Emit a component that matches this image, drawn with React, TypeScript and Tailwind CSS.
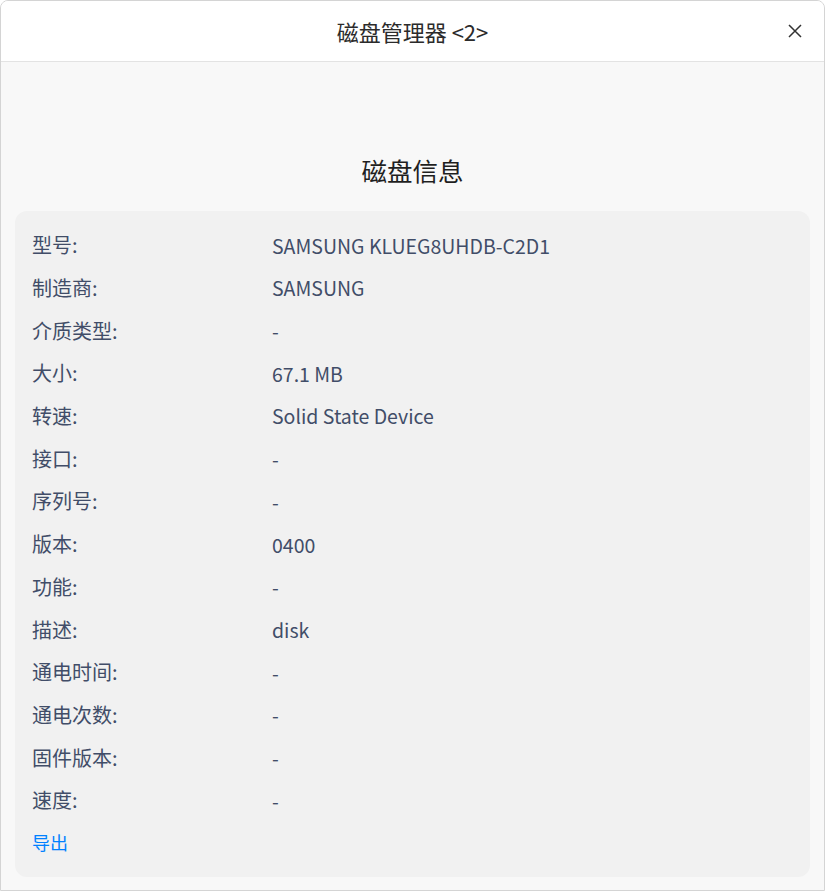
import React from "react";

// Righe delle informazioni del disco
const rows: { label: string; value: string }[] = [
  { label: "型号:", value: "SAMSUNG KLUEG8UHDB-C2D1" },
  { label: "制造商:", value: "SAMSUNG" },
  { label: "介质类型:", value: "-" },
  { label: "大小:", value: "67.1 MB" },
  { label: "转速:", value: "Solid State Device" },
  { label: "接口:", value: "-" },
  { label: "序列号:", value: "-" },
  { label: "版本:", value: "0400" },
  { label: "功能:", value: "-" },
  { label: "描述:", value: "disk" },
  { label: "通电时间:", value: "-" },
  { label: "通电次数:", value: "-" },
  { label: "固件版本:", value: "-" },
  { label: "速度:", value: "-" },
];

const App: React.FC = () => {
  return (
    <div
      className="w-[825px] h-[891px] bg-[#f8f8f8] border border-[#d4d4d4] rounded-t-[8px] flex flex-col overflow-hidden"
      style={{ fontFamily: '"Noto Sans CJK SC", "Noto Sans", sans-serif' }}
    >
      {/* Barra del titolo */}
      <div className="h-[61px] shrink-0 bg-white border-b border-[#e3e3e3] flex items-center justify-center relative">
        <span className="text-[22px] text-[#2b2b2b]">磁盘管理器 &lt;2&gt;</span>
        <button className="absolute right-[19px] top-[20px] w-5 h-5 flex items-center justify-center text-[#333]">
          <svg width="14" height="14" viewBox="0 0 14 14" fill="none" stroke="currentColor" strokeWidth="1.5">
            <path d="M1 1 L13 13 M13 1 L1 13" />
          </svg>
        </button>
      </div>

      {/* Titolo sezione */}
      <div className="h-[149px] shrink-0 flex items-end justify-center pb-[29px]">
        <h1 className="text-[25.5px] text-[#1f1f1f] leading-none">磁盘信息</h1>
      </div>

      {/* Card informazioni */}
      <div className="mx-[14px] bg-[#f1f1f1] rounded-[12px] px-[17px] pt-[13px] pb-[13px] text-[#414d68]">
        {rows.map((r) => (
          <div key={r.label} className="h-[42.7px] flex items-center">
            <span className="w-[240px] shrink-0 text-[20px]">{r.label}</span>
            <span className="text-[19.5px]">{r.value}</span>
          </div>
        ))}
        <div className="h-[42.7px] flex items-center text-[18px] text-[#0081ff]">导出</div>
      </div>
    </div>
  );
};

export default App;
